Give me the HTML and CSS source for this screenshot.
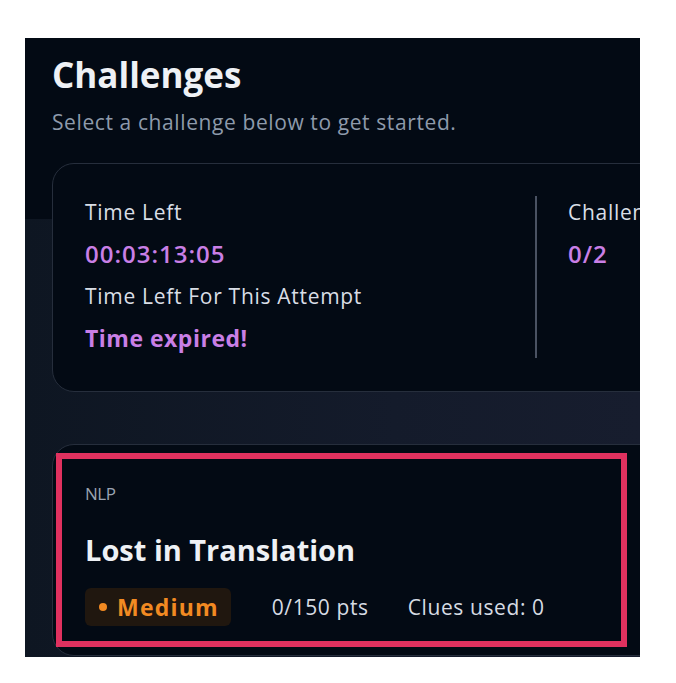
FILE: index.html
```html
<!DOCTYPE html>
<html lang="en">
<head>
<meta charset="utf-8">
<title>Challenges</title>
<link rel="stylesheet" href="styles.css">
</head>
<body>
<div class="frame">
  <div class="page">
    <header class="head">
      <h1 class="title">Challenges</h1>
      <p class="subtitle">Select a challenge below to get started.</p>
    </header>
    <section class="stats">
      <div class="stat-col first">
        <div class="label">Time Left</div>
        <div class="value">00:03:13:05</div>
        <div class="label">Time Left For This Attempt</div>
        <div class="value strong">Time expired!</div>
      </div>
      <div class="stat-col second">
        <div class="label">Challenges Completed</div>
        <div class="value">0/2</div>
      </div>
    </section>
    <section class="card">
      <div class="highlight">
        <div class="category">NLP</div>
        <div class="card-title">Lost in Translation</div>
        <div class="meta">
          <span class="badge"><span class="dot"></span>Medium</span>
          <span class="meta-item">0/150 pts</span>
          <span class="meta-item">Clues used: 0</span>
        </div>
      </div>
    </section>
  </div>
</div>
</body>
</html>
```

FILE: styles.css
```css
* { box-sizing: border-box; }
html, body { margin: 0; padding: 0; background: #ffffff; }
body {
  font-family: "Open Sans", "Noto Sans", sans-serif;
  padding: 38px 0 0 25px;
}
.frame {
  width: 615px;
  height: 619px;
  overflow: hidden;
  background:
    linear-gradient(to bottom, #030a14 0, #030a14 181px, rgba(3,10,20,0) 181px),
    linear-gradient(90deg, #0e1622 0%, #141b2b 60%, #171d2e 100%);
}
.page {
  width: 900px;
  padding: 15px 0 0 27px;
}
.head { margin: 0; }
.title {
  margin: 0;
  font-size: 35px;
  line-height: 44px;
  font-weight: 700;
  color: #eef1f5;
}
.subtitle {
  margin: 12px 0 0;
  font-size: 21px;
  line-height: 26px;
  letter-spacing: 0.6px;
  color: #8e9aab;
}
.stats {
  margin-top: 28px;
  width: 800px;
  height: 229px;
  border: 1px solid #262e3c;
  border-radius: 22px;
  background: #030a14;
  padding: 32px 0 0 32px;
  display: flex;
}
.stat-col { display: flex; flex-direction: column; }
.stat-col.first { width: 450px; }
.stat-col.second {
  border-left: 2px solid #4a5262;
  padding-left: 31px;
  height: 162px;
}
.label {
  font-size: 21px;
  line-height: 32px;
  letter-spacing: 0.7px;
  font-weight: 500;
  color: #d9dee6;
  margin-bottom: 10px;
  white-space: nowrap;
}
.value {
  font-size: 24px;
  line-height: 32px;
  letter-spacing: 1px;
  font-weight: 600;
  color: #c97fe6;
  margin-bottom: 10px;
}
.value.strong {
  font-size: 23px;
  letter-spacing: 0.5px;
  font-weight: 700;
}
.card {
  margin-top: 52px;
  width: 800px;
  border: 1px solid #262e3c;
  border-radius: 22px;
  background: #030a14;
  padding: 8px 0 8px 3px;
}
.highlight {
  width: 571px;
  border: 6px solid #e0315f;
  padding: 23px 0 15px 23px;
}
.category {
  font-size: 17px;
  line-height: 24px;
  letter-spacing: -0.5px;
  color: #9aa3b1;
}
.card-title {
  margin-top: 26px;
  font-size: 29px;
  line-height: 36px;
  font-weight: 700;
  color: #eef1f5;
}
.meta {
  margin-top: 20px;
  display: flex;
  align-items: center;
}
.badge {
  display: flex;
  align-items: center;
  height: 38px;
  padding: 0 12px 0 14px;
  background: #20170f;
  border-radius: 6px;
  color: #f28a22;
  font-weight: 700;
  font-size: 23px;
  letter-spacing: 1.2px;
  margin-right: 41px;
}
.dot {
  width: 8px;
  height: 8px;
  border-radius: 50%;
  background: #f28a22;
  margin-right: 10px;
}
.meta-item {
  font-size: 21px;
  letter-spacing: 0.6px;
  color: #d6dbe3;
  margin-right: 39px;
}
```
